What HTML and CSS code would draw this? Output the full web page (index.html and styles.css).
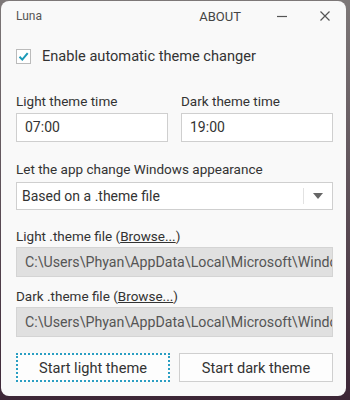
FILE: index.html
```html
<!DOCTYPE html>
<html lang="en">
<head>
    <meta charset="UTF-8">
    <meta name="viewport" content="width=device-width, initial-scale=1.0">
    <title>Luna</title>
    <link rel="stylesheet" href="styles.css">
</head>
<body>
    <div class="window">
        <div class="titlebar">
            <span class="app-name">Luna</span>
            <span class="about">ABOUT</span>
            <span class="win-btn minimize">
                <svg width="12" height="12" viewBox="0 0 12 12"><path d="M1 6.5h10" stroke="#555" stroke-width="1.2"/></svg>
            </span>
            <span class="win-btn close">
                <svg width="12" height="12" viewBox="0 0 12 12"><path d="M1.5 1.5l9 9M10.5 1.5l-9 9" stroke="#555" stroke-width="1.2"/></svg>
            </span>
        </div>

        <div class="content">
            <label class="check-row">
                <span class="checkbox">
                    <svg width="13" height="13" viewBox="0 0 13 13"><path d="M2.5 6.8l2.8 2.8 5.4-6.4" fill="none" stroke="#1b9ab8" stroke-width="2"/></svg>
                </span>
                Enable automatic theme changer
            </label>

            <div class="times">
                <div class="field">
                    <div class="label">Light theme time</div>
                    <div class="input">07:00</div>
                </div>
                <div class="field">
                    <div class="label">Dark theme time</div>
                    <div class="input">19:00</div>
                </div>
            </div>

            <div class="label label-appearance">Let the app change Windows appearance</div>
            <div class="select">
                <span class="select-value">Based on a .theme file</span>
                <span class="select-arrow">
                    <svg width="10" height="6" viewBox="0 0 10 6"><path d="M0 0h10L5 6z" fill="#666"/></svg>
                </span>
            </div>

            <div class="label label-file">Light .theme file (<span class="link">Browse...</span>)</div>
            <div class="path">C:\Users\Phyan\AppData\Local\Microsoft\Windows\Themes\Light.theme</div>

            <div class="label label-file">Dark .theme file (<span class="link">Browse...</span>)</div>
            <div class="path">C:\Users\Phyan\AppData\Local\Microsoft\Windows\Themes\Dark.theme</div>

            <div class="buttons">
                <button class="btn focused">Start light theme</button>
                <button class="btn">Start dark theme</button>
            </div>
        </div>
    </div>
</body>
</html>
```

FILE: styles.css
```css
body {
    margin: 0;
    padding: 1px;
    height: 400px;
    box-sizing: border-box;
    background: linear-gradient(#7d7878, #3c2636);
    font-family: Roboto, 'Noto Sans', sans-serif;
    color: #333;
}

.window {
    width: 345px;
    height: 395px;
    background-color: #f9f9f9;
    border-radius: 8px;
    box-sizing: border-box;
}

.titlebar {
    display: flex;
    align-items: center;
    height: 30px;
    padding: 0 0 0 15px;
}

.app-name {
    font-size: 12px;
    color: #555;
    flex: 1;
}

.about {
    font-size: 13px;
    color: #444;
    margin-right: 18px;
}

.win-btn {
    display: flex;
    justify-content: center;
    width: 45px;
}

.close {
    width: 42px;
}

.content {
    padding: 0 13px 0 15px;
}

.check-row {
    display: flex;
    align-items: center;
    margin-top: 16px;
    font-size: 14.6px;
    line-height: 18px;
}

.checkbox {
    display: flex;
    justify-content: center;
    align-items: center;
    width: 15px;
    height: 15px;
    border: 1px solid #bbb;
    background: #fff;
    box-sizing: border-box;
    margin-right: 11px;
}

.times {
    display: flex;
    gap: 13px;
    margin-top: 27px;
}

.field {
    flex: 1;
}

.label {
    font-size: 13.5px;
    line-height: 18px;
    color: #333;
}

.input {
    margin-top: 3px;
    height: 29px;
    border: 1px solid #cfcfcf;
    background: #fff;
    box-sizing: border-box;
    padding: 0 8px;
    font-size: 14px;
    line-height: 27px;
}

.label-appearance {
    margin-top: 18px;
}

.select {
    display: flex;
    align-items: center;
    margin-top: 4px;
    height: 28px;
    border: 1px solid #cfcfcf;
    background: #fff;
    box-sizing: border-box;
    font-size: 14px;
}

.select-value {
    flex: 1;
    padding-left: 5px;
}

.select-arrow {
    display: flex;
    justify-content: center;
    align-items: center;
    width: 28px;
    height: 16px;
    border-left: 1px solid #e2e2e2;
}

.label-file {
    margin-top: 17px;
}

.link {
    text-decoration: underline;
}

.path {
    margin-top: 2px;
    height: 30px;
    border: 1px solid #d4d4d4;
    background: #e0e0e0;
    box-sizing: border-box;
    padding: 0 8px;
    font-size: 14.2px;
    line-height: 28px;
    color: #555;
    white-space: nowrap;
    overflow: hidden;
}

.label-file + .path + .label-file {
    margin-top: 10px;
}

.buttons {
    display: flex;
    gap: 9px;
    margin-top: 16px;
}

.btn {
    flex: 1;
    height: 29px;
    border: 1px solid #cfcfcf;
    background: #fdfdfd;
    font-family: inherit;
    font-size: 14.6px;
    color: #333;
}

.focused {
    border: 2px dotted #2a9ec2;
    flex: 0 0 154px;
}
```
